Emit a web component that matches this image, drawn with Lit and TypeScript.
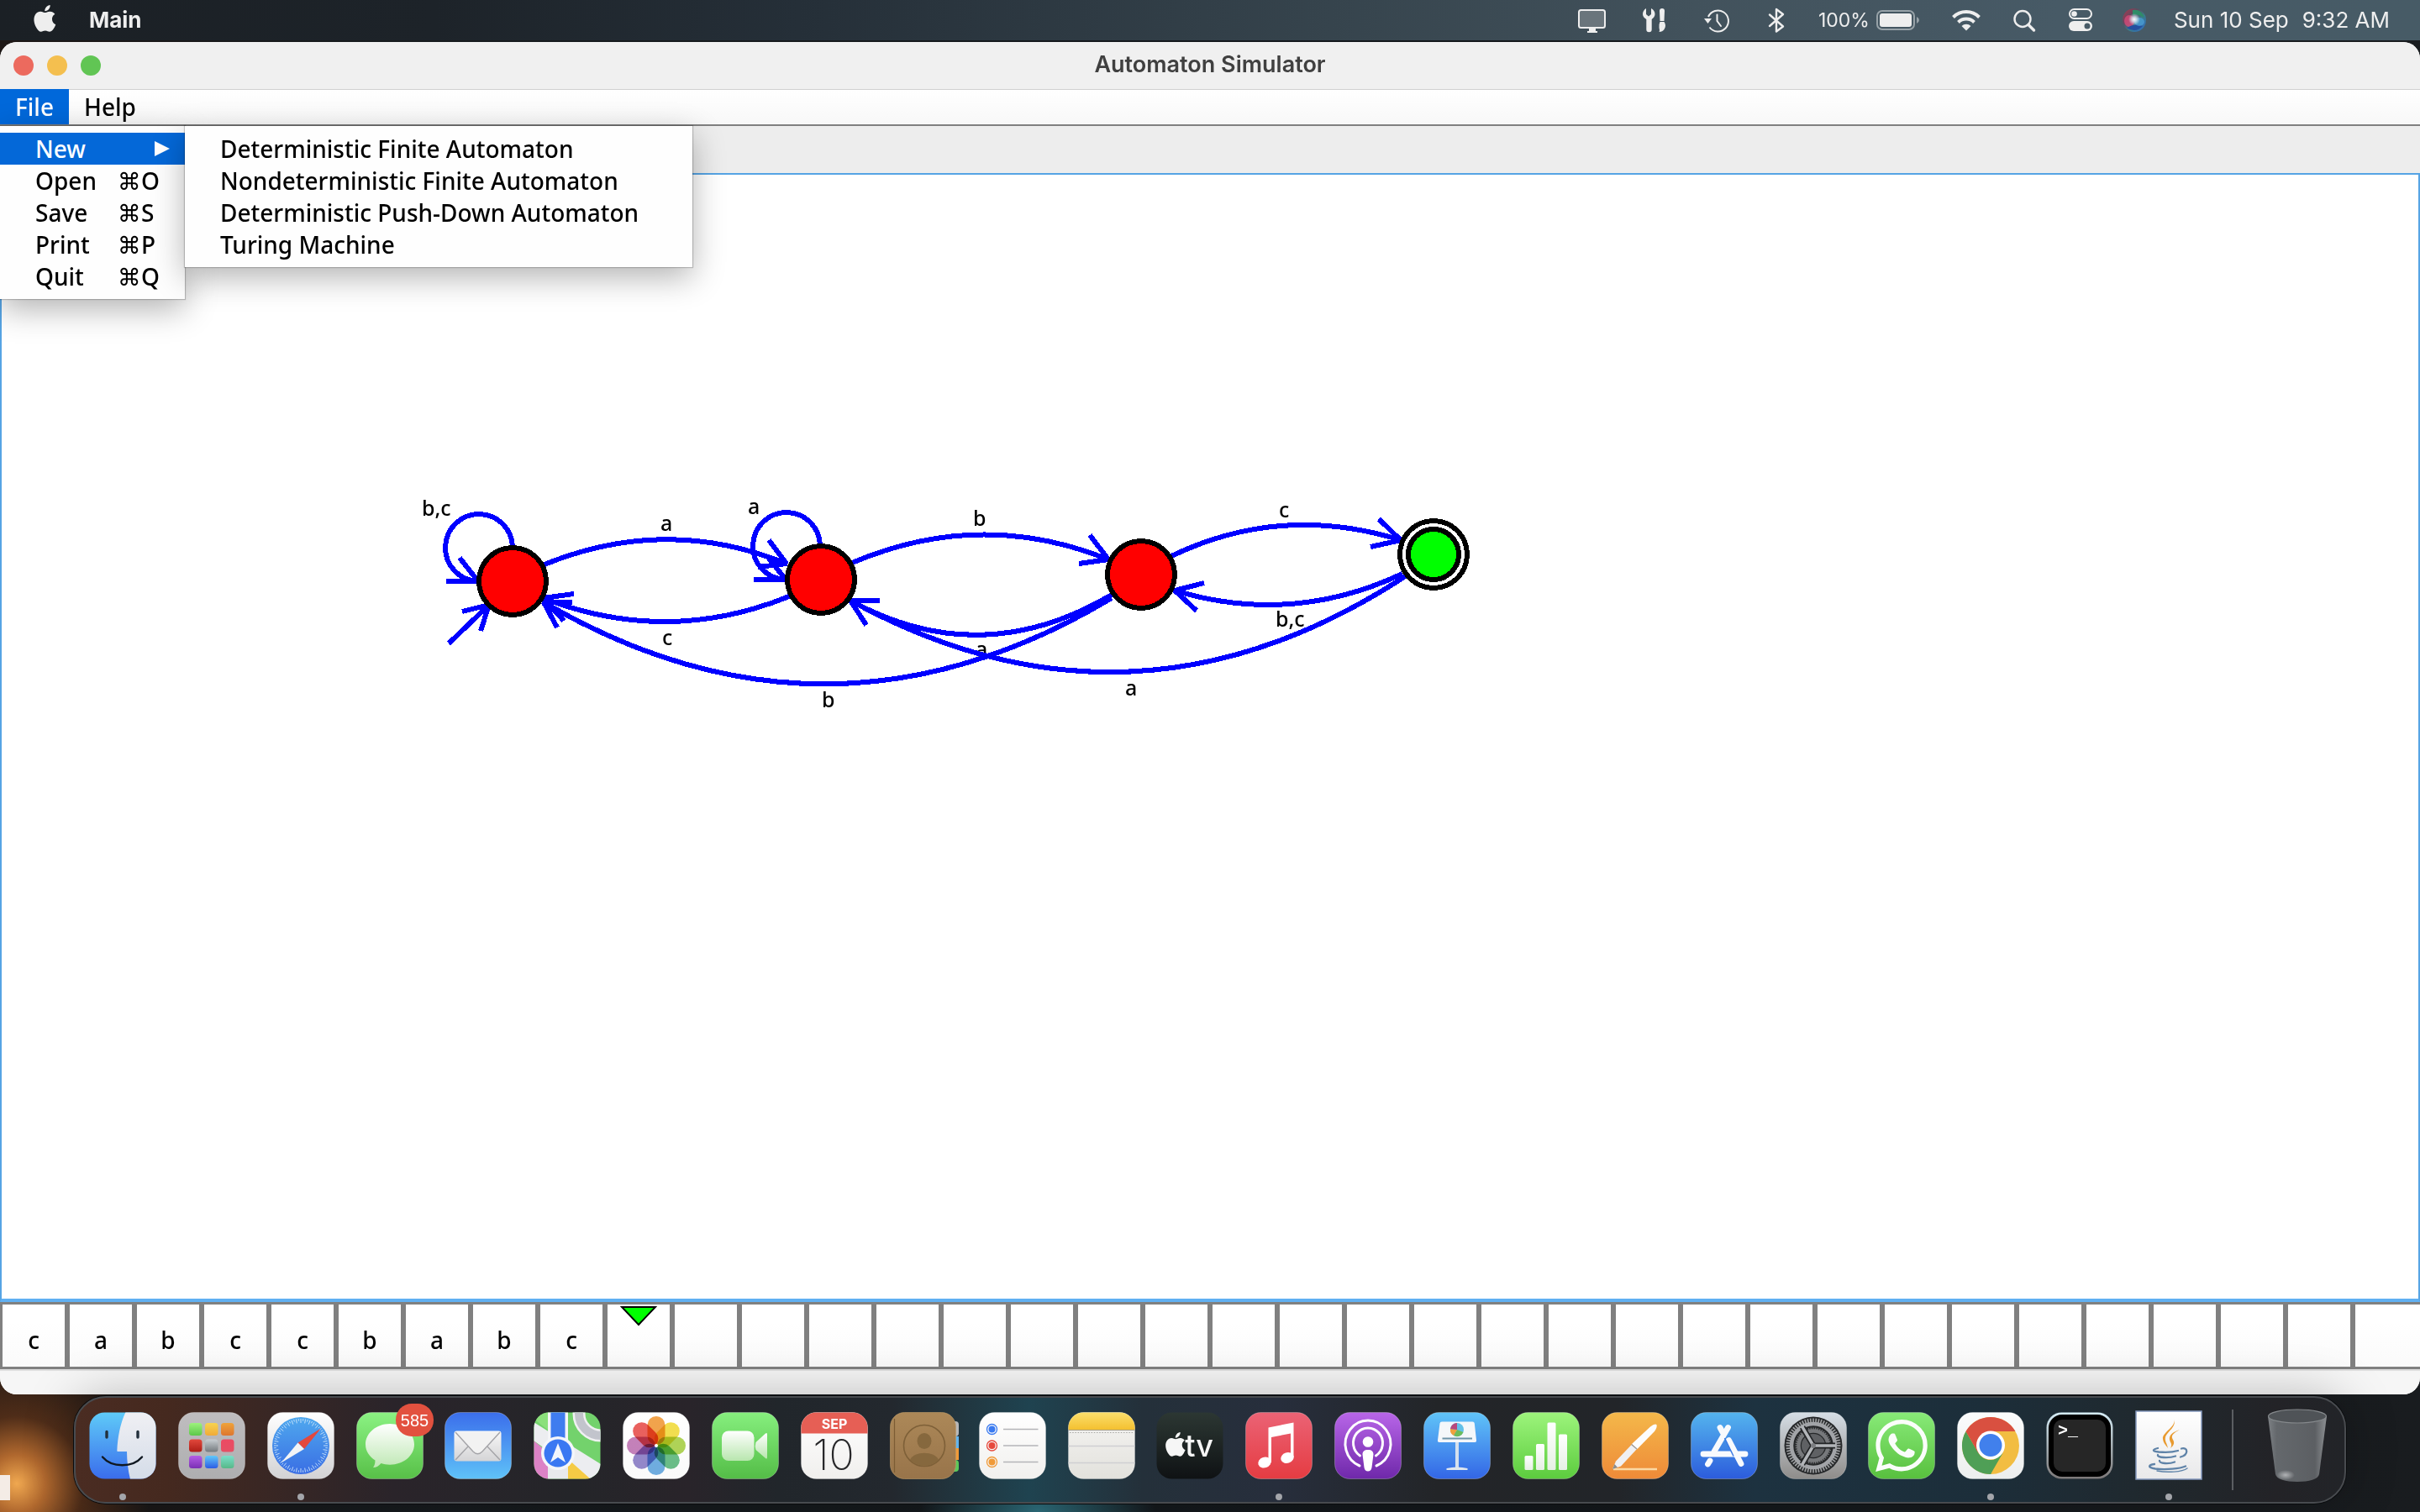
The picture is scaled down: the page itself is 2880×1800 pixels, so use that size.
import { LitElement, html, svg, css, nothing } from "lit";
import type { SVGTemplateResult } from "lit";
import { customElement, state } from "lit/decorators.js";

const APPLE =
  "M12.152 6.896c-.948 0-2.415-1.078-3.96-1.04-2.04.027-3.91 1.183-4.961 3.014-2.117 3.675-.546 9.103 1.519 12.09 1.013 1.454 2.208 3.09 3.792 3.039 1.52-.065 2.09-.987 3.935-.987 1.831 0 2.35.987 3.96.948 1.637-.026 2.676-1.48 3.676-2.948 1.156-1.688 1.636-3.325 1.662-3.415-.039-.013-3.182-1.221-3.22-4.857-.026-3.04 2.48-4.494 2.597-4.559-1.429-2.09-3.623-2.324-4.39-2.376-2-.156-3.675 1.09-4.61 1.09zM15.53 3.83c.843-1.012 1.4-2.427 1.245-3.83-1.207.052-2.662.805-3.532 1.818-.78.896-1.454 2.338-1.273 3.714 1.338.104 2.715-.688 3.559-1.701";

const WHATSAPP =
  "M17.472 14.382c-.297-.149-1.758-.867-2.03-.967-.273-.099-.471-.148-.67.15-.197.297-.767.966-.94 1.164-.173.199-.347.223-.644.075-.297-.15-1.255-.463-2.39-1.475-.883-.788-1.48-1.761-1.653-2.059-.173-.297-.018-.458.13-.606.134-.133.298-.347.446-.52.149-.174.198-.298.298-.497.099-.198.05-.371-.025-.52-.075-.149-.669-1.612-.916-2.207-.242-.579-.487-.5-.669-.51-.173-.008-.371-.01-.57-.01-.198 0-.52.074-.792.372-.272.297-1.04 1.016-1.04 2.479 0 1.462 1.065 2.875 1.213 3.074.149.198 2.096 3.2 5.077 4.487.709.306 1.262.489 1.694.625.712.227 1.36.195 1.871.118.571-.085 1.758-.719 2.006-1.413.248-.694.248-1.289.173-1.413-.074-.124-.272-.198-.57-.347m-5.421 7.403h-.004a9.87 9.87 0 01-5.031-1.378l-.361-.214-3.741.982.998-3.648-.235-.374a9.86 9.86 0 01-1.51-5.26c.001-5.45 4.436-9.884 9.888-9.884 2.64 0 5.122 1.03 6.988 2.898a9.825 9.825 0 012.893 6.994c-.003 5.45-4.437 9.884-9.885 9.884m8.413-18.297A11.815 11.815 0 0012.05 0C5.495 0 .16 5.335.157 11.892c0 2.096.547 4.142 1.588 5.945L.057 24l6.305-1.654a11.882 11.882 0 005.683 1.448h.005c6.554 0 11.89-5.335 11.893-11.893a11.821 11.821 0 00-3.48-8.413z";

const grad = (id: string, from: string, to: string) => svg`
  <linearGradient id=${id} x1="0" y1="0" x2="0" y2="1">
    <stop offset="0" stop-color=${from}></stop>
    <stop offset="1" stop-color=${to}></stop>
  </linearGradient>`;

/** Rounded application tile filled with a vertical gradient. */
const tile = (id: string, from: string, to: string) => svg`
  <defs>${grad(id, from, to)}</defs>
  <rect x=".5" y=".5" width="79" height="79" rx="18" fill=${`url(#${id})`} stroke="#fff" stroke-opacity=".25"></rect>`;

const ticks = (n: number, r1: number, r2: number, color: string, w: number, alt = 0) =>
  Array.from({ length: n }, (_, i) => {
    const a = (i / n) * Math.PI * 2;
    const inner = alt && i % 2 ? r1 + alt : r1;
    return svg`<line x1=${40 + inner * Math.cos(a)} y1=${40 + inner * Math.sin(a)}
      x2=${40 + r2 * Math.cos(a)} y2=${40 + r2 * Math.sin(a)} stroke=${color} stroke-width=${w}></line>`;
  });

const finder = svg`
  <defs>${grad("fi", "#5fcbf8", "#3a6cec")}${grad("fi2", "#f0f0f4", "#d4dce8")}
    <clipPath id="ficlip"><rect x=".5" y=".5" width="79" height="79" rx="18"></rect></clipPath></defs>
  <g clip-path="url(#ficlip)">
    <rect width="80" height="80" fill="url(#fi)"></rect>
    <path d="M43.500 0C37 14 34 30 33.300 46.300q0 .7 1 .7H45C45 58 46.500 70 49 80H80V0Z" fill="url(#fi2)"></path>
  </g>
  <path d="M21 23.500v6.500M58 23.500v6.500" stroke="#22303c" stroke-width="3.400" stroke-linecap="round"></path>
  <path d="M16 53.500C27 66.500 52 66.500 63 53.500" fill="none" stroke="#101820" stroke-width="2.400" stroke-linecap="round"></path>`;

const padColors: [string, string][] = [
  ["#9df27c", "#5cc84a"], ["#f7d34f", "#f0aa38"], ["#efa33a", "#dd7630"],
  ["#e2483c", "#ad1d16"], ["#c8ced2", "#747a7e"], ["#ec4a63", "#e55064"],
  ["#b45ce6", "#7a30b4"], ["#60c8fa", "#2c5ce4"], ["#7adfca", "#57b888"],
];
const launchpad = svg`
  ${tile("lp", "#bfbdbf", "#aeaeb0")}
  ${padColors.map(([a, b], i) => svg`<defs>${grad(`lp${i}`, a, b)}</defs>
    <rect x=${13 + (i % 3) * 19} y=${13 + Math.floor(i / 3) * 19.500} width="15.500" height="15" rx="3.500" fill=${`url(#lp${i})`}></rect>`)}`;

const safari = svg`
  ${tile("sa", "#ffffff", "#d2d2d4")}
  <defs>${grad("sa2", "#4fa8ee", "#3a6ee4")}</defs>
  <circle cx="40" cy="40" r="34" fill="url(#sa2)"></circle>
  ${ticks(72, 27, 32, "#cfe6fb", 0.9, 2.5)}
  <path d="M64 19.500 44 44 36.500 36.500Z" fill="#e2483e"></path>
  <path d="M16.500 60.500 36.500 36.500 44 44Z" fill="#f2f4f6"></path>`;

const messages = svg`
  ${tile("ms", "#8bf283", "#58c048")}
  <defs>${grad("ms2", "#ffffff", "#bfe8b4")}</defs>
  <path d="M40 14C24 14 11 25 11 38.500c0 8 4.500 14.500 11.500 19 0 4-1 6.500-2.500 8.500 4 0 7-2 9.500-5 3.500 1.200 6.500 1.700 10.500 1.700 16 0 29-10.700 29-24.200S56 14 40 14Z" fill="url(#ms2)"></path>
  <rect x="47" y="-10" width="45" height="39" rx="19" fill="#e2513f"></rect>
  <text x="69.500" y="17" text-anchor="middle" class="badge">585</text>`;

const mail = svg`
  ${tile("ml", "#3b6eeb", "#5fc2f8")}
  <defs>${grad("ml2", "#f8f8f8", "#d4d4d6")}</defs>
  <rect x="11.500" y="22.500" width="56" height="36" rx="3" fill="url(#ml2)"></rect>
  <path d="M13 57 28 41M66 57 51 41" stroke="#a4a4a8" stroke-width="1.400"></path>
  <path d="M13 24 34 47q5.500 5.500 11 0L66 24" fill="#f2f2f2" stroke="#a4a4a8" stroke-width="1.400"></path>`;

const maps = svg`
  <defs><clipPath id="mpclip"><rect x=".5" y=".5" width="79" height="79" rx="18"></rect></clipPath></defs>
  <g clip-path="url(#mpclip)">
    <rect width="80" height="80" fill="#73d26c"></rect>
    <path d="M0 12 80 62V90L0 34Z" fill="#ecedf0"></path>
    <path d="M0 34 17 48V80H0Z" fill="#dc82c6"></path>
    <path d="M41 56 68 80H41Z" fill="#f5cb45"></path>
    <path d="M17 30H41V80H17Z" fill="#e8e9ec"></path>
    <path d="M0 8V0H18V22Z" fill="#8be07c"></path>
    <rect x="17" y="0" width="24" height="42" fill="#f4f5f8"></rect>
    <rect x="20.500" y="0" width="17" height="42" fill="#3f7def"></rect>
    <circle cx="80" cy="2" r="26" fill="none" stroke="#f0f0f2" stroke-width="15"></circle>
    <circle cx="80" cy="2" r="26" fill="none" stroke="#c2c4cc" stroke-width="10"></circle>
  </g>
  <circle cx="29" cy="49" r="20" fill="#f4f6fa"></circle>
  <circle cx="29" cy="49" r="16.500" fill="#3a78f2"></circle>
  <path d="M29 37 38 60 29 54 20 60Z" fill="#f2f6fc"></path>`;

const petals = ["#f19a38", "#f2dc3c", "#a8d046", "#5cb87c", "#62a6e0", "#8a7cc8", "#c074b4", "#e8504c"];
const photos = svg`
  ${tile("ph", "#ffffff", "#fafafa")}
  <g class="petals">${petals.map((c, i) => svg`
    <rect x="29.500" y="5" width="21" height="34" rx="10.500" fill=${c} fill-opacity=".9" transform=${`rotate(${i * 45} 40 40)`}></rect>`)}</g>
  <circle cx="40" cy="40" r="2" fill="#fff"></circle>`;

const facetime = svg`
  ${tile("ft", "#86ef7e", "#54bd47")}
  <defs>${grad("ft2", "#ffffff", "#b8e6ae")}</defs>
  <rect x="12" y="22.500" width="38.500" height="35.500" rx="8" fill="url(#ft2)"></rect>
  <path d="M52.500 36 64 25.500q2-1.500 2 1V54q0 2.500-2 1L52.500 45q-1.500-4.500 0-9Z" fill="url(#ft2)"></path>`;

const calendar = svg`
  ${tile("ca", "#ffffff", "#f0efed")}
  <path d="M.5 25.500V18.500A18 18 0 0 1 18.500 .5H61.500A18 18 0 0 1 79.500 18.500V25.500Z" fill="#e65f55"></path>
  <text x="40" y="19.500" text-anchor="middle" class="cal-month">SEP</text>
  <text x="39" y="68.500" text-anchor="middle" class="cal-day">10</text>`;

const contacts = svg`
  <rect x="66" y="11" width="16" height="18" rx="4" fill="#b8b8ba"></rect>
  <rect x="66" y="29" width="16" height="14" fill="#62b4ee"></rect>
  <rect x="66" y="43" width="16" height="14" fill="#f09a38"></rect>
  <rect x="66" y="57" width="16" height="14" rx="4" fill="#5cc85a"></rect>
  <defs>${grad("co", "#ac8858", "#98744a")}</defs>
  <rect x=".5" y=".5" width="78" height="79" rx="17" fill="url(#co)" stroke="#c09c68" stroke-opacity=".6"></rect>
  <path d="M5.500 8V72" stroke="#7c5c34" stroke-width="1.200"></path>
  <circle cx="41" cy="40" r="24.500" fill="none" stroke="#7e6038" stroke-width="1.600"></circle>
  <ellipse cx="41" cy="34.500" rx="8.500" ry="9.500" fill="#86683e"></ellipse>
  <path d="M24 57c4-11 30-11 34 0-9 9-25 9-34 0Z" fill="#86683e"></path>`;

const reminders = svg`
  ${tile("re", "#ffffff", "#f1f0ee")}
  ${["#3a7af0", "#e6483c", "#f09a38"].map((c, i) => svg`
    <circle cx="15.500" cy=${20.500 + i * 19.500} r="6" fill="none" stroke=${c} stroke-width="1.300"></circle>
    <circle cx="15.500" cy=${20.500 + i * 19.500} r="4" fill=${c}></circle>
    <line x1="29" x2="70.500" y1=${20.500 + i * 19.500} y2=${20.500 + i * 19.500} stroke="#b4b4b8" stroke-width="1.300"></line>`)}`;

const notes = svg`
  ${tile("no", "#f6f5f3", "#e2e1dc")}
  <defs>${grad("no2", "#fbdf6c", "#f4c030")}</defs>
  <path d="M.5 21V18.500A18 18 0 0 1 18.500 .5H61.500A18 18 0 0 1 79.500 18.500V21Z" fill="url(#no2)"></path>
  <path d="M.5 21.500H79.500" stroke="#a8a08c" stroke-width="1.200"></path>
  <path d="M2 24.500H78" stroke="#a8a8a4" stroke-width="1.200" stroke-dasharray="1.500 1.700"></path>
  <path d="M.5 40.500H79.500M.5 60.500H79.500" stroke="#cfcfd2" stroke-width="1.500"></path>`;

const tv = svg`
  <defs>${grad("tv", "#2c3733", "#0f1214")}</defs>
  <rect x=".5" y=".5" width="79" height="79" rx="18" fill="url(#tv)"></rect>
  <path d=${APPLE} transform="translate(8.500 24) scale(1.200)" fill="#f6f6f6"></path>
  <text x="51" y="52.500" text-anchor="middle" class="tv">tv</text>`;

const music = svg`
  ${tile("mu", "#eb6375", "#e53c42")}
  <path d="M27.500 18.500 57.500 12.500V54H54V25.500L31 30V60H27.500Z" fill="#fff"></path>
  <ellipse cx="23" cy="60" rx="7.800" ry="6.300" fill="#fff" transform="rotate(-18 23 60)"></ellipse>
  <ellipse cx="50" cy="54.500" rx="7.800" ry="6.300" fill="#fff" transform="rotate(-18 50 54.500)"></ellipse>`;

const podcasts = svg`
  ${tile("po", "#b866e8", "#6f28aa")}
  <g fill="none" stroke="#fff" stroke-width="3" stroke-linecap="round">
    <path d="M30 64A27 28 0 1 1 50 64"></path>
    <path d="M30.500 52A17.500 18 0 1 1 49.500 52"></path>
  </g>
  <circle cx="40" cy="35.500" r="6.300" fill="#fff"></circle>
  <path d="M40 45c4.500 0 6.500 2 6.500 5.500L44.500 66c-.6 6-8.400 6-9 0L33.500 50.500C33.500 47 35.500 45 40 45Z" fill="#fff"></path>`;

const keynote = svg`
  ${tile("ke", "#60c4f8", "#3366e6")}
  <rect x="38" y="35" width="4" height="31" fill="#d4e0ee"></rect>
  <path d="M27.500 67q12.500-3 25 0v2h-25Z" fill="#dfe6ee"></path>
  <path d="M22 11.500H58.500q2 0 2.300 2L63 33.500q.3 2.500-2 2.500H19q-2.300 0-2-2.500L19.500 13.500q.3-2 2.500-2Z" fill="#f4f7fa"></path>
  <path d="M22.500 31.500H58" stroke="#6d93a8" stroke-width="2"></path>
  <circle cx="40" cy="21" r="8" fill="#62c0e8"></circle>
  <path d="M40 21 47.500 24A8 8 0 0 1 36 28Z" fill="#6cbc5c"></path>
  <path d="M40 21 36 28A8 8 0 0 1 32 20Z" fill="#f0a03c"></path>
  <path d="M40 21 32 20A8 8 0 0 1 40 13Z" fill="#b8487c"></path>`;

const numbers = svg`
  ${tile("nu", "#9df47c", "#5ccc3e")}
  <defs>${grad("nu2", "#ffffff", "#e6f0e4")}</defs>
  <rect x="14.500" y="52" width="10" height="17" rx="1.500" fill="url(#nu2)"></rect>
  <rect x="28" y="38" width="10" height="31" rx="1.500" fill="url(#nu2)"></rect>
  <rect x="41.500" y="12.500" width="10" height="56.500" rx="1.500" fill="url(#nu2)"></rect>
  <rect x="55" y="26.500" width="10" height="42.500" rx="1.500" fill="url(#nu2)"></rect>`;

const pages = svg`
  ${tile("pa", "#f4b84a", "#ee8a38")}
  <path d="M14 68H66" stroke="#fbd9a4" stroke-width="2.500"></path>
  <path d="M13 68 17 58.500 36 38.500 42 44 23 64.500Z" fill="#f0f0f2"></path>
  <path d="M36 38 58 17.500q5-4 7.500-2.500 1 3-2.500 8L42.500 44Z" fill="#fdfdfd"></path>
  <path d="M13 68 15.500 62 19 66Z" fill="#8c8c8c"></path>
  <path d="M35.500 38.500 42 44" stroke="#9a9a9c" stroke-width="1.300"></path>`;

const appstore = svg`
  ${tile("as", "#54b4ee", "#2c5cdc")}
  <g stroke="#f8fafd" stroke-width="6.800" stroke-linecap="round">
    <path d="M35 18.500 38 24"></path>
    <path d="M44.500 18.500 28 47"></path>
    <path d="M23 58 20.500 62"></path>
    <path d="M15 50H65"></path>
    <path d="M45.500 33.500 60 61.500"></path>
  </g>
  <path d="M40.500 31 51 52.500" stroke="#3a7ae4" stroke-width="1.500"></path>`;

const settings = svg`
  ${tile("se", "#d6dee6", "#8e8c8a")}
  <circle cx="40" cy="40" r="34.500" fill="#26282a"></circle>
  ${ticks(60, 27, 32.5, "#9c9ea0", 1.700)}
  <circle cx="40" cy="40" r="26" fill="none" stroke="#a2a4a8" stroke-width="4.500"></circle>
  <circle cx="40" cy="40" r="17.500" fill="none" stroke="#77797c" stroke-width="4.500"></circle>
  ${ticks(48, 19, 21.5, "#77797c", 1.300)}
  <circle cx="40" cy="40" r="14" fill="#5f6164"></circle>
  <path d="M40 40H66M40 40 27 18M40 40 27 62" stroke="#222426" stroke-width="7"></path>
  <path d="M40 40H67M40 40 26.500 17M40 40 26.500 63" stroke="#b2b5b9" stroke-width="3.500"></path>
  <circle cx="40" cy="40" r="3" fill="#7c7e82"></circle>`;

const whatsapp = svg`
  ${tile("wh", "#88ea78", "#58c03e")}
  <path d=${WHATSAPP} transform="translate(9 9) scale(2.580)" fill="#fafdfa"></path>`;

const chrome = svg`
  ${tile("ch", "#fbfcfc", "#eceeee")}
  <circle cx="40" cy="40" r="34" fill="#f2bd42"></circle>
  <path d="M10.500 23A34 34 0 0 1 69.500 23H40A17 17 0 0 0 25.300 31.500Z" fill="#d95040"></path>
  <path d="M10.500 23 25.300 48.500A17 17 0 0 0 47 55.500L40 74A34 34 0 0 1 10.500 23Z" fill="#4f9f56"></path>
  <path d="M10.500 23 25.500 49 34 34 40 23Z" fill="#d95040"></path>
  <path d="M54.700 48.500 40 74 38 62Z" fill="#4f9f56"></path>
  <circle cx="40" cy="39.500" r="17" fill="#fff"></circle>
  <circle cx="40" cy="39.500" r="13.500" fill="#4180ec"></circle>`;

const terminal = svg`
  <defs>${grad("te", "#d4ecf6", "#7c7878")}</defs>
  <rect x=".5" y=".5" width="79" height="79" rx="18" fill="url(#te)"></rect>
  <rect x="3" y="3" width="74" height="74" rx="16" fill="#000"></rect>
  <rect x="9" y="9" width="62" height="62" rx="10" fill="#262626"></rect>
  <text x="14" y="28" class="prompt">&gt;_</text>`;

const java = svg`
  <defs>${grad("ja", "#ffffff", "#e9e9ea")}</defs>
  <rect x="1" y="-1" width="78" height="81" fill="url(#ja)" stroke="#8297bc" stroke-width="1.500"></rect>
  <path d="M46 8c4 9-14 16-13 24 .5 5 4 8 6 11-1-6-4-8-3-13C38 23 50 18 46 8Z" fill="#e89a30"></path>
  <path d="M53 21c-9 3-13 7-12 12 .5 3 4 5 1 10 5-4 5-7 2.500-11-2-4 1-7 8.500-11Z" fill="#e89a30"></path>
  <g fill="none" stroke="#5f83a8" stroke-width="2.300" stroke-linecap="round">
    <path d="M27 43c-6 1.500-8 3.500 1 4.500 8 .7 18 0 23-1.500"></path>
    <path d="M55 43.500c8-2 9 7-1 10"></path>
    <path d="M27 51c-1 3.500 13 4 21 1.500"></path>
    <path d="M29 58c0 3.500 11 4 18 1.500"></path>
    <path d="M23 62c-7 1-9 4 1 5.500 13 1.500 29 0 36-3"></path>
    <path d="M26 70c12 2.500 30 1.500 36-3" stroke-width="1.500"></path>
  </g>`;

interface DockApp { name: string; art: SVGTemplateResult; running?: boolean }
const dockApps: DockApp[] = [
  { name: "Finder", art: finder, running: true },
  { name: "Launchpad", art: launchpad },
  { name: "Safari", art: safari, running: true },
  { name: "Messages", art: messages },
  { name: "Mail", art: mail },
  { name: "Maps", art: maps },
  { name: "Photos", art: photos },
  { name: "FaceTime", art: facetime },
  { name: "Calendar", art: calendar },
  { name: "Contacts", art: contacts },
  { name: "Reminders", art: reminders },
  { name: "Notes", art: notes },
  { name: "TV", art: tv },
  { name: "Music", art: music, running: true },
  { name: "Podcasts", art: podcasts },
  { name: "Keynote", art: keynote },
  { name: "Numbers", art: numbers },
  { name: "Pages", art: pages },
  { name: "App Store", art: appstore },
  { name: "System Preferences", art: settings },
  { name: "WhatsApp", art: whatsapp },
  { name: "Chrome", art: chrome, running: true },
  { name: "Terminal", art: terminal },
  { name: "Java", art: java, running: true },
];

@customElement("mac-dock")
export class MacDock extends LitElement {
  static styles = css`
    :host { display: block; position: relative; }
    .dock {
      box-sizing: border-box; height: 128px; padding: 17px 16px 0 3px; display: flex; align-items: flex-start;
      border: 2px solid #484b4f; border-radius: 38px;
      box-shadow: 0 0 60px rgba(0, 0, 0, 0.25), 0 0 0 1px #0c0e10;
      background: linear-gradient(90deg, #4a2c22 0%, #45291f 4%, #2a242a 14%, #242529 22%, #29242a 27%, #21262b 31%, #23282e 36%,
        #1f4350 42%, #24303a 47%, #272e3c 53%, #232528 60%, #222529 68%, #1d3240 74%, #1c2e3a 84%, #20282d 92%, #232327 97%, #222428 100%);
    }
    .apps { flex: 1; display: flex; margin: 0; padding: 0; list-style: none; }
    .slot { flex: 1; display: flex; justify-content: center; }
    button {
      position: relative; display: flex; align-items: flex-start; border: 0; padding: 0; background: none;
      width: 80px; height: 105px;
    }
    svg { display: block; width: 80px; height: 80px; overflow: visible; }
    .running::after {
      content: ""; position: absolute; left: 36px; bottom: 0; width: 8px; height: 8px; border-radius: 50%; background: #a3a5aa;
    }
    .divider { width: 2px; height: 96px; margin: -3px 36px 0 22px; background: #5b5e62; }
    .trash { width: 80px; }
    .trash svg { height: 90px; margin-top: -4px; }
    .petals rect { mix-blend-mode: multiply; }
    .badge { font: 20px "Liberation Sans", sans-serif; fill: #fff; }
    .cal-month { font: 700 16px Inter, sans-serif; fill: #fff; }
    .cal-day { font: 200 50px Inter, sans-serif; fill: #28282a; }
    .tv { font: 500 36px Inter, sans-serif; fill: #f6f6f6; }
    .prompt { font: 700 20px "Liberation Mono", monospace; fill: #fff; }
  `;

  render() {
    return html`
      <nav class="dock" aria-label="Dock">
        <ul class="apps">
          ${dockApps.map((a) => html`<li class="slot">
            <button class=${a.running ? "running" : "idle"} aria-label=${a.name}><svg viewBox="0 0 80 80">${a.art}</svg></button>
          </li>`)}
        </ul>
        <div class="divider"></div>
        <button class="trash" aria-label="Trash">
          <svg viewBox="0 0 80 90">
            <defs>
              <linearGradient id="bin">
                <stop offset="0" stop-color="#7d8185"></stop><stop offset=".15" stop-color="#64686c"></stop>
                <stop offset=".8" stop-color="#5c5f63"></stop><stop offset="1" stop-color="#8e9194"></stop>
              </linearGradient>
              <radialGradient id="shine"><stop offset="0" stop-color="#c4c6c8" stop-opacity=".8"></stop><stop offset="1" stop-color="#c4c6c8" stop-opacity="0"></stop></radialGradient>
            </defs>
            <path d="M5 9 14 78c1 6 12 9 26 9s25-3 26-9L75 9Z" fill="url(#bin)"></path>
            <ellipse cx="26" cy="79" rx="11" ry="6" fill="url(#shine)"></ellipse>
            <ellipse cx="40" cy="9" rx="34.500" ry="8" fill="#4f5357" stroke="#85898c" stroke-width="1.200"></ellipse>
          </svg>
        </button>
      </nav>`;
  }
}

type Pt = [number, number];
interface Edge { from: Pt; ctrl: Pt; to: Pt; barbs: [Pt, Pt]; label: string; at: Pt }
interface Loop { center: Pt; tip: Pt; barbs: [Pt, Pt]; label: string; at: Pt }
interface StateNode { at: Pt; accepting?: boolean }

const stateNodes: StateNode[] = [
  { at: [608, 484] }, { at: [975, 482] }, { at: [1356, 476] }, { at: [1704, 452], accepting: true },
];

const loops: Loop[] = [
  { center: [568, 444], tip: [567, 484], barbs: [[529, 484], [545, 456]], label: "b,c", at: [500, 406] },
  { center: [934, 442], tip: [933, 482], barbs: [[895, 482], [911, 454]], label: "a", at: [888, 404] },
];

const edges: Edge[] = [
  { from: [646, 464], ctrl: [791, 405], to: [934, 463], barbs: [[913, 435], [900, 467]], label: "a", at: [784, 424] },
  { from: [1012, 462], ctrl: [1165, 397], to: [1317, 458], barbs: [[1295, 429], [1282, 463]], label: "b", at: [1156, 418] },
  { from: [937, 502], ctrl: [792, 561], to: [644, 504], barbs: [[681, 499], [669, 531]], label: "c", at: [786, 560] },
  { from: [1321, 500], ctrl: [1165, 592], to: [1010, 507], barbs: [[1045, 507], [1029, 536]], label: "a", at: [1159, 574] },
  { from: [1321, 504], ctrl: [983, 706], to: [645, 509], barbs: [[679, 509], [661, 539]], label: "b", at: [976, 634] },
  { from: [1392, 454], ctrl: [1523, 391], to: [1665, 435], barbs: [[1639, 410], [1629, 443]], label: "c", at: [1520, 408] },
  { from: [1667, 475], ctrl: [1535, 537], to: [1396, 495], barbs: [[1431, 486], [1422, 519]], label: "b,c", at: [1516, 538] },
  { from: [1672, 477], ctrl: [1346, 691], to: [1010, 507], barbs: [[1045, 507], [1029, 536]], label: "a", at: [1337, 620] },
];

const arrow = (tip: Pt, [a, b]: [Pt, Pt]) => `M${a} L${tip} L${b}`;

@customElement("automaton-canvas")
export class AutomatonCanvas extends LitElement {
  static styles = css`
    :host { display: block; }
    svg { display: block; width: 100%; height: 100%; }
    .line { fill: none; stroke: #00f; stroke-width: 6px; stroke-linejoin: bevel; shape-rendering: crispEdges; }
    .label { font: 500 25px "Noto Sans", sans-serif; fill: #000; }
    .node { fill: #f00; stroke: #000; stroke-width: 6px; shape-rendering: crispEdges; }
    .ring { fill: #fff; }
    .accept { fill: #0f0; }
  `;

  render() {
    return html`<svg role="img" aria-label="State diagram">
      ${loops.map((l) => svg`
        <text class="label" x=${l.at[0]} y=${l.at[1]}>${l.label}</text>
        <path class="line" d=${`M${l.center[0] + 40} ${l.center[1]} A40 40 0 1 0 ${l.tip}`}></path>
        <path class="line" d=${arrow(l.tip, l.barbs)}></path>`)}
      ${edges.map((e) => svg`
        <text class="label" x=${e.at[0]} y=${e.at[1]}>${e.label}</text>
        <path class="line" d=${`M${e.from} Q${e.ctrl} ${e.to}`}></path>
        <path class="line" d=${arrow(e.to, e.barbs)}></path>`)}
      <path class="line" d="M532 558 L580 512 M548 520 L580 512 L570 543"></path>
      ${stateNodes.map((n) => svg`
        <circle class=${n.accepting ? "node ring" : "node"} cx=${n.at[0]} cy=${n.at[1]} r="40"></circle>
        ${n.accepting ? svg`<circle class="node accept" cx=${n.at[0]} cy=${n.at[1]} r="30"></circle>` : nothing}`)}
    </svg>`;
  }
}

const fileItems = [
  { name: "Open", key: "⌘O" }, { name: "Save", key: "⌘S" }, { name: "Print", key: "⌘P" }, { name: "Quit", key: "⌘Q" },
];
const newItems = [
  "Deterministic Finite Automaton", "Nondeterministic Finite Automaton", "Deterministic Push-Down Automaton", "Turing Machine",
];
const tape = "cabccbabc".split("");
const tapeLength = 36;

@customElement("app-root")
export class AppRoot extends LitElement {
  @state() private head = 9;

  static styles = css`
    :host { display: block; }
    * { box-sizing: border-box; }
    button { border: 0; padding: 0; margin: 0; background: none; color: inherit; font: inherit; text-align: left; }
    .desktop {
      display: flex; flex-direction: column; height: 100vh; overflow: hidden;
      background:
        linear-gradient(#f4ece6, #f4ece6) 0 calc(100% - 14px) / 12px 30px no-repeat,
        radial-gradient(circle at 20px calc(100% - 34px), #f0a850 0, #b0682e 34px, rgba(100, 54, 26, 0.7) 80px, rgba(30, 20, 18, 0) 160px),
        radial-gradient(ellipse at 1235px 100%, #2f7180 0, rgba(30, 50, 60, 0) 140px),
        linear-gradient(90deg, #1c1614, #171b1e 15%, #14181c 60%, #191c1f);
    }
    .system-bar {
      flex: none; display: flex; align-items: center; height: 48px; margin-bottom: 2px; padding: 0 36px 0 38px;
      background: linear-gradient(90deg, #1b2025 0%, #1d2329 18%, #252f38 33%, #36444d 55%, #42525c 70%, #475a66 85%, #475b66 100%);
      color: #eee; font: 26px/46px Inter, "Liberation Sans", sans-serif;
    }
    .system-bar svg { display: block; height: 48px; overflow: visible; }
    .logo { width: 30px; }
    .app-name { margin-left: 38px; font-weight: 700; }
    .tray { margin-left: auto; display: flex; align-items: center; gap: 32px; }
    .battery { display: flex; align-items: center; gap: 8px; font-size: 23px; }
    .clock { display: flex; gap: 16px; white-space: nowrap; }
    .w30 { width: 30px; } .w34 { width: 34px; } .w36 { width: 36px; } .w38 { width: 38px; } .w42 { width: 42px; } .w56 { width: 56px; }

    .window {
      flex: 1; min-height: 0; display: flex; flex-direction: column; overflow: hidden;
      border-radius: 20px; background: #ededed; font: 500 28px/38px "Noto Sans", "DejaVu Sans", sans-serif; color: #000;
    }
    .title-bar { flex: none; display: grid; grid-template-columns: 1fr auto 1fr; align-items: center; height: 56px; padding: 0 16px; background: #f0f0f0; }
    .lights { display: flex; gap: 16px; }
    .light { width: 24px; height: 24px; border-radius: 50%; }
    .close { background: #ec6a5e; } .minimise { background: #f4bf4f; } .zoom { background: #61c554; }
    h1 { margin: 0; padding-bottom: 2px; font: 600 27px/50px Inter, "Liberation Sans", sans-serif; color: #404040; }
    .menu-bar {
      flex: none; display: flex; height: 44px; border-bottom: 2px solid #808080;
      background: linear-gradient(#d0d0d0 1px, #fff 1px, #f8f8f8);
    }
    .menu { position: relative; }
    .menu-title { height: 42px; padding: 0 18px; line-height: 42px; }
    .menu-title.open { background: #0068da; color: #fff; }
    .popup {
      position: absolute; z-index: 2; padding: 8px 0; background: #fefefe; white-space: nowrap;
      box-shadow: 0 0 1px 1px rgba(0, 0, 0, 0.2), 0 12px 36px rgba(0, 0, 0, 0.3);
    }
    .file-popup { top: 44px; left: 0; width: 220px; }
    .new-popup { top: 44px; left: 220px; width: 604px; z-index: 3; }
    .item { display: grid; grid-template-columns: 98px 1fr; align-items: center; width: 100%; height: 38px; padding: 0 18px 0 42px; }
    .item.active { background: #0468d8; color: #fff; }
    .item.plain { display: block; }
    .expand { justify-self: end; width: 18px; height: 18px; fill: #fff; }
    .tool-bar { flex: none; height: 56px; background: #ededed; }
    .canvas {
      flex: 1; min-height: 0; background: #fff; border: 2px solid #56a4e4; border-bottom: 4px solid #60b0f2;
    }
    .tape { flex: none; display: flex; height: 80px; overflow: hidden; background: linear-gradient(#fff, #fff 30%, #fafafa); }
    .cell { flex: none; width: 80px; display: flex; align-items: center; justify-content: center; position: relative; border: 3px solid #808080; padding-top: 10px; }
    .cell:last-child { flex: 1 0 80px; border-right: 0; }
    .head { position: absolute; top: 0; left: 15px; width: 44px; height: 26px; }
    .status { flex: none; height: 30px; border-top: 2px solid #dedede; background: #f6f6f6; }
    .dock { flex: none; margin: 2px 88px 10px; }
  `;

  private renderTray() {
    return html`
      <svg class="w42" viewBox="0 0 42 48" role="img" aria-label="Display"><rect x="5" y="12" width="31" height="21" rx="2.500" fill="#6a757c" stroke="#eee" stroke-width="2"></rect><path d="M17 34h8v3h2v2H15v-2h2Z" fill="#eee"></path></svg>
      <svg class="w42" viewBox="0 0 42 48" role="img" aria-label="Tools"><path d="M11 10v7l3 2.500 3-2.500v-7c3 1.500 4.500 4 4.500 7 0 2.500-2 4.500-3.800 6v12a3.200 3.200 0 0 1-6.400 0V23C9 21.500 7 19.500 7 17c0-3 1.500-5.500 4-7Z" fill="#eee"></path><path d="M27 13q0-3 3-3t3 3l-.5 12h-5ZM27.500 26h5c2 3 2 6 0 9q-2 3-6 3 1-2 0-5-.5-4 1-7Z" fill="#eee"></path></svg>
      <svg class="w42" viewBox="0 0 42 48" role="img" aria-label="Time Machine"><g fill="none" stroke="#eee" stroke-width="2"><path d="M11 20A12.500 12.500 0 1 1 12.500 32.500"></path><path d="M21.500 17.500V25l4.500 6" stroke-linecap="round"></path></g><path d="M6 22h9l-4.500 6Z" fill="#eee"></path></svg>
      <svg class="w36" viewBox="0 0 36 48" role="img" aria-label="Bluetooth"><path d="M10 17.500 26 31.500 18 37.500V11L26 17 10 31" fill="none" stroke="#eee" stroke-width="2.400" stroke-linejoin="round" stroke-linecap="round"></path></svg>
      <span class="battery"><span>100%</span>
        <svg class="w56" viewBox="0 0 56 48" role="img" aria-label="Battery"><rect x="1" y="13" width="44" height="22" rx="6" fill="none" stroke="#97a2a8" stroke-width="2"></rect><rect x="4" y="16" width="38" height="16" rx="3" fill="#eee"></rect><path d="M48 20q3 1.500 3 4t-3 4Z" fill="#97a2a8"></path></svg></span>
      <svg class="w38" viewBox="0 0 38 48" role="img" aria-label="Wi-Fi"><g fill="none" stroke="#eee" stroke-width="4"><path d="M3.500 20.500a22 22 0 0 1 31 0"></path><path d="M9.500 26.500a13.500 13.500 0 0 1 19 0"></path></g><path d="M13.500 31a7.700 7.700 0 0 1 11 0L19 36.500Z" fill="#eee"></path></svg>
      <svg class="w36" viewBox="0 0 36 48" role="img" aria-label="Search"><circle cx="16" cy="22.500" r="9.500" fill="none" stroke="#eee" stroke-width="2.400"></circle><path d="M23 29.500 29.500 36" stroke="#eee" stroke-width="3.400" stroke-linecap="round"></path></svg>
      <svg class="w34" viewBox="0 0 34 48" role="img" aria-label="Control Centre"><rect x="4" y="11" width="26" height="11" rx="5.500" fill="none" stroke="#eee" stroke-width="2"></rect><circle cx="9.500" cy="16.500" r="3.300" fill="#eee"></circle><rect x="3" y="25" width="28" height="12" rx="6" fill="#eee"></rect><circle cx="25" cy="31" r="3.500" fill="#475a66"></circle></svg>
      <svg class="w30" viewBox="0 0 30 48" role="img" aria-label="Siri">
        <defs>
          <linearGradient id="siri" x1="0" y1="0" x2="1" y2="1"><stop offset="0" stop-color="#b8344c"></stop><stop offset=".35" stop-color="#5c4a60"></stop><stop offset=".6" stop-color="#3a7c8c"></stop><stop offset="1" stop-color="#3068c8"></stop></linearGradient>
          <radialGradient id="glow"><stop offset="0" stop-color="#fff"></stop><stop offset=".4" stop-color="#dcecf4" stop-opacity=".8"></stop><stop offset="1" stop-color="#dcecf4" stop-opacity="0"></stop></radialGradient>
        </defs>
        <circle cx="15" cy="24" r="14" fill="url(#siri)"></circle>
        <path d="M13 12q10-2 14 9-7-5-14-3Z" fill="#2f8c68"></path>
        <ellipse cx="9" cy="25" rx="6" ry="7" fill="#d84878" opacity=".8"></ellipse>
        <path d="M6 33q9-6 19-2-9 9-19 2Z" fill="#2450a0"></path>
        <ellipse cx="21" cy="26" rx="6" ry="5" fill="#50a8e8" opacity=".6"></ellipse>
        <circle cx="15" cy="23" r="7" fill="url(#glow)"></circle>
      </svg>
      <time class="clock"><span>Sun 10 Sep</span><span>9:32 AM</span></time>`;
  }

  private renderMenus() {
    return html`
      <nav class="menu-bar" aria-label="Application menu">
        <div class="menu">
          <button class="menu-title open" aria-haspopup="menu" aria-expanded="true">File</button>
          <div class="popup file-popup" role="menu">
            <button class="item active" role="menuitem" aria-haspopup="menu" aria-expanded="true">
              <span>New</span>
              <svg class="expand" viewBox="0 0 18 18" aria-hidden="true"><path d="M0 0 18 9 0 18Z"></path></svg>
            </button>
            ${fileItems.map((i) => html`<button class="item" role="menuitem"><span>${i.name}</span><span>${i.key}</span></button>`)}
          </div>
          <div class="popup new-popup" role="menu">
            ${newItems.map((n) => html`<button class="item plain" role="menuitem">${n}</button>`)}
          </div>
        </div>
        <div class="menu"><button class="menu-title" aria-haspopup="menu">Help</button></div>
      </nav>`;
  }

  render() {
    return html`
      <div class="desktop">
        <header class="system-bar">
          <svg class="logo" viewBox="0 0 30 48" role="img" aria-label="Apple"><path d=${APPLE} transform="translate(-.5 6) scale(1.320)" fill="#eee"></path></svg>
          <span class="app-name">Main</span>
          <div class="tray">${this.renderTray()}</div>
        </header>
        <main class="window">
          <div class="title-bar">
            <div class="lights">
              <button class="light close" aria-label="Close"></button>
              <button class="light minimise" aria-label="Minimise"></button>
              <button class="light zoom" aria-label="Zoom"></button>
            </div>
            <h1>Automaton Simulator</h1>
          </div>
          ${this.renderMenus()}
          <div class="tool-bar"></div>
          <automaton-canvas class="canvas"></automaton-canvas>
          <div class="tape">
            ${Array.from({ length: tapeLength }, (_, i) => html`<div class="cell">${i === this.head
              ? html`<svg class="head" viewBox="0 0 44 26" aria-hidden="true"><path d="M2 3H42L22 24Z" fill="#0f0" stroke="#000" stroke-width="2"></path></svg>`
              : nothing}${tape[i] ?? nothing}</div>`)}
          </div>
          <div class="status"></div>
        </main>
        <mac-dock class="dock"></mac-dock>
      </div>`;
  }
}
